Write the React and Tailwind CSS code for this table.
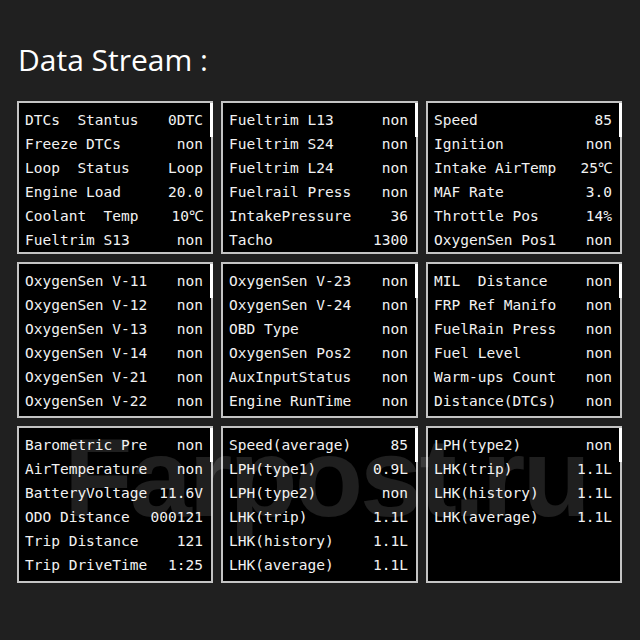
const panels = [
  [
    ['DTCs  Stantus', '0DTC'],
    ['Freeze DTCs', 'non'],
    ['Loop  Status', 'Loop'],
    ['Engine Load', '20.0'],
    ['Coolant  Temp', '10℃'],
    ['Fueltrim S13', 'non'],
  ],
  [
    ['Fueltrim L13', 'non'],
    ['Fueltrim S24', 'non'],
    ['Fueltrim L24', 'non'],
    ['Fuelrail Press', 'non'],
    ['IntakePressure', '36'],
    ['Tacho', '1300'],
  ],
  [
    ['Speed', '85'],
    ['Ignition', 'non'],
    ['Intake AirTemp', '25℃'],
    ['MAF Rate', '3.0'],
    ['Throttle Pos', '14%'],
    ['OxygenSen Pos1', 'non'],
  ],
  [
    ['OxygenSen V-11', 'non'],
    ['OxygenSen V-12', 'non'],
    ['OxygenSen V-13', 'non'],
    ['OxygenSen V-14', 'non'],
    ['OxygenSen V-21', 'non'],
    ['OxygenSen V-22', 'non'],
  ],
  [
    ['OxygenSen V-23', 'non'],
    ['OxygenSen V-24', 'non'],
    ['OBD Type', 'non'],
    ['OxygenSen Pos2', 'non'],
    ['AuxInputStatus', 'non'],
    ['Engine RunTime', 'non'],
  ],
  [
    ['MIL  Distance', 'non'],
    ['FRP Ref Manifo', 'non'],
    ['FuelRain Press', 'non'],
    ['Fuel Level', 'non'],
    ['Warm-ups Count', 'non'],
    ['Distance(DTCs)', 'non'],
  ],
  [
    ['Barometric Pre', 'non'],
    ['AirTemperature', 'non'],
    ['BatteryVoltage', '11.6V'],
    ['ODO Distance', '000121'],
    ['Trip Distance', '121'],
    ['Trip DriveTime', '1:25'],
  ],
  [
    ['Speed(average)', '85'],
    ['LPH(type1)', '0.9L'],
    ['LPH(type2)', 'non'],
    ['LHK(trip)', '1.1L'],
    ['LHK(history)', '1.1L'],
    ['LHK(average)', '1.1L'],
  ],
  [
    ['LPH(type2)', 'non'],
    ['LHK(trip)', '1.1L'],
    ['LHK(history)', '1.1L'],
    ['LHK(average)', '1.1L'],
  ],
];

function Panel({rows}) {
  return (
    <div className="relative border-2 border-[#c4c4c4] bg-black pt-[6px] pl-[6px] pr-[8px]">
      <div className="absolute -right-[2px] top-0 h-[34px] w-[3px] bg-white"/>
      {rows.map(([label, value], i) => (
        <div key={i} className="flex h-[24px] items-center justify-between whitespace-pre text-[14.5px] text-[#f2f2f2]">
          <span>{label}</span>
          <span>{value}</span>
        </div>
      ))}
    </div>
  );
}

export default function App() {
  return (
    <div className="relative h-[640px] w-[640px] overflow-hidden bg-[#202020]">
      <div className="pl-[18px] pt-[43px]">
        <h1 className="text-[30px] leading-[34px] text-white" style={{fontFamily: '"Open Sans", "Noto Sans", sans-serif'}}>
          Data Stream :
        </h1>
      </div>

      <div className="ml-[17px] mt-[24px] grid grid-cols-[196px_197px_196px] grid-rows-[153px_156px_157px] gap-x-[8px] gap-y-[8px]"
           style={{fontFamily: '"DejaVu Sans Mono", "Liberation Mono", monospace'}}>
        {panels.map((rows, i) => (
          <Panel key={i} rows={rows}/>
        ))}
      </div>

      <div className="pointer-events-none absolute left-[64px] top-[422px] whitespace-pre text-[112px] font-bold leading-none tracking-[-3px] text-white/[0.12]"
           style={{fontFamily: '"Liberation Sans", Arial, sans-serif'}}>
        Farpost.ru
      </div>
    </div>
  );
}
